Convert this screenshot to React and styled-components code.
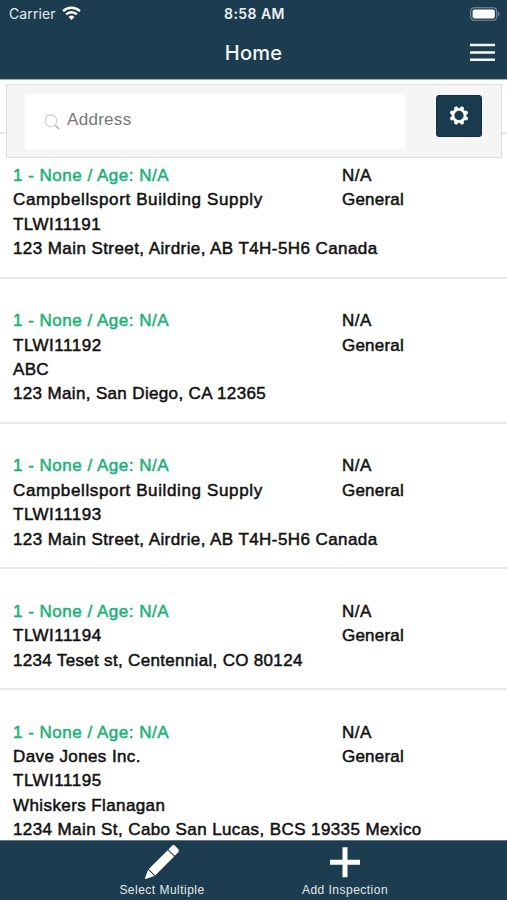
import React from "react";
import styled, { createGlobalStyle } from "styled-components";

const GlobalStyle = createGlobalStyle`
    * {
        box-sizing: border-box;
    }
    body {
        margin: 0;
        background: white;
        font-family: "Liberation Sans", Arial, sans-serif;
    }
`;
const Screen = styled.div`
    display: flex;
    flex-direction: column;
    width: 507px;
    height: 900px;
    overflow: hidden;
`;
const Header = styled.header`
    flex: none;
    height: 80px;
    background: #1c3c4f;
    border-bottom: 1px solid #a3b0b8;
    color: white;
    font-family: Inter, sans-serif;
`;
const StatusBar = styled.div`
    display: grid;
    grid-template-columns: 1fr auto 1fr;
    align-items: center;
    height: 27px;
    padding: 0 7px 0 9px;
`;
const Carrier = styled.div`
    display: flex;
    align-items: center;
    gap: 6px;
    font-size: 14px;
    letter-spacing: 0.1px;
    color: #e6ecef;
`;
const Clock = styled.div`
    font-size: 14px;
    font-weight: 600;
    letter-spacing: 0.45px;
    color: #edf1f3;
`;
const Battery = styled.svg`
    justify-self: end;
`;
const TitleBar = styled.div`
    display: grid;
    grid-template-columns: 1fr auto 1fr;
    align-items: center;
    height: 51px;
    padding: 0 12px;
`;
const Title = styled.h1`
    grid-column: 2;
    margin: 0;
    font-size: 20px;
    line-height: 24px;
    font-weight: 550;
    letter-spacing: 0.2px;
    color: #f4f6f7;
`;
const MenuButton = styled.div`
    display: flex;
    justify-self: end;
`;
const Content = styled.main`
    position: relative;
    flex: 1;
    min-height: 0;
    overflow: hidden;
`;
const SearchPanel = styled.div`
    position: absolute;
    top: 4px;
    left: 6px;
    right: 5px;
    display: flex;
    justify-content: space-between;
    align-items: flex-start;
    height: 74px;
    padding: 9px 19px 0 18px;
    background: #f5f5f5;
    border: 1px solid #dfdfdf;
`;
const SearchBox = styled.div`
    display: flex;
    align-items: center;
    gap: 7px;
    width: 380px;
    height: 55px;
    padding-left: 19px;
    background: white;
`;
const Placeholder = styled.span`
    margin-top: -3px;
    font-size: 17px;
    letter-spacing: 0.3px;
    color: #777;
`;
const SettingsButton = styled.div`
    display: flex;
    align-items: center;
    justify-content: center;
    width: 46px;
    height: 42px;
    margin-top: 1px;
    border-radius: 3px;
    background: #1a3a4d;
    border: 1px solid #122f40;
`;
const List = styled.div`
    padding-top: 51.6px;
    border-bottom: 2px solid #e6e6e6;
`;
const Row = styled.div`
    display: flex;
    padding: 30.4px 13px 15.3px;
    border-top: 2px solid #e8e8e8;
`;
const Details = styled.div`
    width: 329px;
`;
const Line = styled.div`
    height: 24.4px;
    line-height: 24.4px;
    font-size: 17px;
    letter-spacing: ${props => props.$tracking || 0.2}px;
    white-space: nowrap;
    color: ${props => (props.$status ? "#1bb177" : "#111")};
    -webkit-text-stroke: 0.5px currentColor;
`;
const Footer = styled.footer`
    display: flex;
    flex: none;
    justify-content: center;
    height: 60px;
    padding-top: 3px;
    background: #1c3c4f;
    border-top: 1px solid #5f7684;
`;
const Tab = styled.div`
    display: flex;
    flex-direction: column;
    align-items: center;
    width: 183px;
`;
const TabLabel = styled.span`
    margin-top: 2px;
    font-size: 12px;
    line-height: 16px;
    letter-spacing: 0.48px;
    color: #e3eaee;
`;

const inspections = [
    {
        id: 11191,
        lines: [
            { text: "Campbellsport Building Supply", tracking: 0.63 },
            { text: "TLWI11191", tracking: 0.45 },
            { text: "123 Main Street, Airdrie, AB T4H-5H6 Canada", tracking: 0.42 }
        ]
    },
    {
        id: 11192,
        lines: [
            { text: "TLWI11192", tracking: 0.5 },
            { text: "ABC", tracking: 0.3 },
            { text: "123 Main, San Diego, CA 12365", tracking: 0.35 }
        ]
    },
    {
        id: 11193,
        lines: [
            { text: "Campbellsport Building Supply", tracking: 0.63 },
            { text: "TLWI11193", tracking: 0.5 },
            { text: "123 Main Street, Airdrie, AB T4H-5H6 Canada", tracking: 0.42 }
        ]
    },
    {
        id: 11194,
        lines: [
            { text: "TLWI11194", tracking: 0.5 },
            { text: "1234 Teset st, Centennial, CO 80124", tracking: 0.32 }
        ]
    },
    {
        id: 11195,
        lines: [
            { text: "Dave Jones Inc.", tracking: 0.4 },
            { text: "TLWI11195", tracking: 0.5 },
            { text: "Whiskers Flanagan", tracking: 0.4 },
            { text: "1234 Main St, Cabo San Lucas, BCS 19335 Mexico", tracking: 0.4 }
        ]
    }
];

const WifiIcon = () => (
    <svg width="19" height="15" viewBox="0 0 19 15" fill="none" stroke="white" strokeWidth="2.4">
        <path d="M1.1 5.2a12 12 0 0 1 16.8 0" />
        <path d="M4.1 8.4a7.7 7.7 0 0 1 10.8 0" />
        <path d="M6.6 10.9a4.2 4.2 0 0 1 5.8 0L9.5 14z" fill="white" stroke="none" />
    </svg>
);

const BatteryIcon = () => (
    <Battery width="30" height="14" viewBox="0 0 30 14">
        <rect x="0.7" y="0.7" width="26" height="12.6" rx="3.6" fill="none" stroke="#7d909b" strokeWidth="1.1" />
        <rect x="2.6" y="2.5" width="22.2" height="9" rx="1.8" fill="white" />
        <path d="M28.1 4.6c1.8.7 1.8 4.1 0 4.8z" fill="#7d909b" />
    </Battery>
);

const MenuIcon = () => (
    <svg width="25" height="19" viewBox="0 0 25 19">
        <path d="M0 2h25M0 9.4h25M0 16.8h25" stroke="#f4f6f7" strokeWidth="2.5" />
    </svg>
);

const SearchIcon = () => (
    <svg width="16" height="16" viewBox="0 0 16 16" fill="none">
        <circle cx="7" cy="6.8" r="5.9" stroke="#cfcfcf" strokeWidth="1.1" />
        <path d="M11.2 11.1l4 4" stroke="#b5b5b5" strokeWidth="1.5" />
    </svg>
);

const GearIcon = () => (
    <svg width="20" height="20" viewBox="-10 -9.5 20 20" fill="white">
        {[22.5, 67.5, 112.5, 157.5, 202.5, 247.5, 292.5, 337.5].map(angle => (
            <path key={angle} d="M-2.6-6L-1.3-9.4H1.3L2.6-6z" transform={`rotate(${angle})`} />
        ))}
        <circle r="6" fill="none" stroke="white" strokeWidth="2.7" />
    </svg>
);

const PencilIcon = () => (
    <svg width="36" height="36" viewBox="0 0 36 36" fill="white">
        <path d="M24.4 5.4l3.4-3.5q1.7-1.6 3.4 0l3 3q1.6 1.7 0 3.4l-3.4 3.4z" />
        <path d="M23.7 6.2l6.4 6.3-18.9 18.9-6.4-6.4z" />
        <path d="M4.1 25.8l6.2 6.2-8.6 2.9q-1 .1-.7-.8z" />
    </svg>
);

const PlusIcon = () => (
    <svg width="36" height="36" viewBox="0 0 36 36">
        <path d="M3 18.3h30M18 3.3v30" stroke="white" strokeWidth="5" />
    </svg>
);

export default () => (
    <>
        <GlobalStyle />
        <Screen>
            <Header>
                <StatusBar>
                    <Carrier>
                        Carrier
                        <WifiIcon />
                    </Carrier>
                    <Clock>8:58 AM</Clock>
                    <BatteryIcon />
                </StatusBar>
                <TitleBar>
                    <Title>Home</Title>
                    <MenuButton>
                        <MenuIcon />
                    </MenuButton>
                </TitleBar>
            </Header>
            <Content>
                <List>
                    {inspections.map(item => (
                        <Row key={item.id}>
                            <Details>
                                <Line $status $tracking={0.5}>1 - None / Age: N/A</Line>
                                {item.lines.map(line => (
                                    <Line key={line.text} $tracking={line.tracking}>{line.text}</Line>
                                ))}
                            </Details>
                            <div>
                                <Line $tracking={0.5}>N/A</Line>
                                <Line>General</Line>
                            </div>
                        </Row>
                    ))}
                </List>
                <SearchPanel>
                    <SearchBox>
                        <SearchIcon />
                        <Placeholder>Address</Placeholder>
                    </SearchBox>
                    <SettingsButton>
                        <GearIcon />
                    </SettingsButton>
                </SearchPanel>
            </Content>
            <Footer>
                <Tab>
                    <PencilIcon />
                    <TabLabel>Select Multiple</TabLabel>
                </Tab>
                <Tab>
                    <PlusIcon />
                    <TabLabel>Add Inspection</TabLabel>
                </Tab>
            </Footer>
        </Screen>
    </>
);
